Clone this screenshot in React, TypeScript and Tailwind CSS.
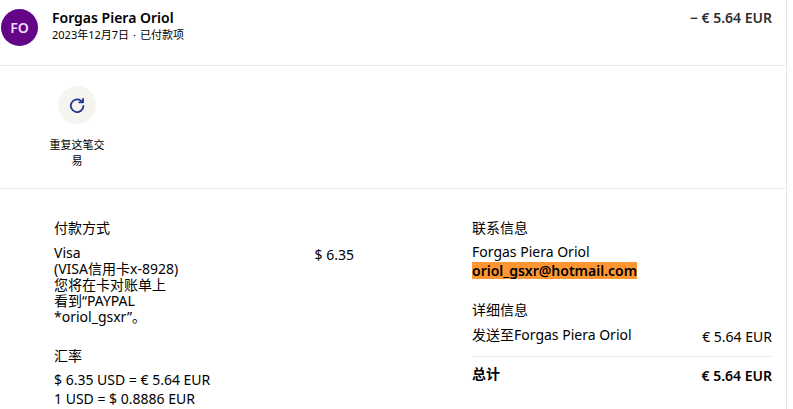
import React from "react";

type LineItemProps = {
  label: string;
  amount: string;
  bold?: boolean;
};

function LineItem({ label, amount, bold = false }: LineItemProps) {
  return (
    <div className={bold ? "flex justify-between font-semibold" : "flex justify-between"}>
      <dt>{label}</dt>
      <dd className="mt-0.5 text-right">{amount}</dd>
    </div>
  );
}

function SectionTitle({ children }: { children: React.ReactNode }) {
  return <h2 className="text-sm leading-4">{children}</h2>;
}

function RepeatIcon() {
  return (
    <svg viewBox="0 0 16 16" className="size-4" fill="none" stroke="#23369c" strokeWidth="1.8" aria-hidden="true">
      <path d="M14.4 8.9A6.3 6.3 0 1 1 11.9 3.7L13.4 5" strokeLinecap="round" strokeLinejoin="round" />
      <path d="M14 1.8V5.3H10.2" strokeLinecap="round" strokeLinejoin="round" />
    </svg>
  );
}

export default function App() {
  return (
    <div className="bg-white pr-1.5 font-['Noto_Sans','Noto_Sans_CJK_SC',sans-serif] text-sm leading-4 text-black">
      <main className="min-h-screen border-r border-[#e4e4e4]">
        <header className="flex items-start border-b border-[#ececec] pt-2 pr-3.5 pb-[19px]">
          <div className="mt-px mr-3.5 ml-px flex size-[37px] shrink-0 items-center justify-center rounded-full bg-[#640487] text-sm font-semibold text-[#f3d9fa]">
            FO
          </div>
          <div className="flex-1 pt-0.5">
            <h1 className="text-sm leading-4 font-semibold">Forgas Piera Oriol</h1>
            <p className="mt-px text-[11px] leading-4">
              2023年12月7日<span className="mx-1">·</span>已付款项
            </p>
          </div>
          <p className="pt-0.5 font-semibold text-[#2c2e2f]">− € 5.64 EUR</p>
        </header>

        <section className="border-b border-[#ececec] pt-5 pb-[19px] pl-12">
          <button type="button" className="flex w-14.5 flex-col items-center text-[11px] leading-4">
            <span className="mb-[13px] flex size-9.5 items-center justify-center rounded-full bg-[#f5f4ef]">
              <RepeatIcon />
            </span>
            重复这笔交易
          </button>
        </section>

        <div className="grid grid-cols-2 gap-x-[118px] pt-[31px] pr-3.5 pl-[54px]">
          <section>
            <SectionTitle>付款方式</SectionTitle>
            <div className="mt-[9px] flex justify-between">
              <p>
                Visa
                <br />
                (VISA信用卡x-8928)
                <br />
                您将在卡对账单上
                <br />
                看到“PAYPAL
                <br />
                *oriol_gsxr”。
              </p>
              <p className="mt-0.5">$ 6.35</p>
            </div>
            <div className="mt-[23px]">
              <SectionTitle>汇率</SectionTitle>
              <p className="mt-1.5 leading-[19px]">
                $ 6.35 USD = € 5.64 EUR
                <br />1 USD = $ 0.8886 EUR
              </p>
            </div>
          </section>

          <section>
            <SectionTitle>联系信息</SectionTitle>
            <p className="mt-2">Forgas Piera Oriol</p>
            <a href="mailto:oriol_gsxr@hotmail.com" className="mt-0.5 inline-block bg-[#ff9632] leading-[17px] font-semibold">
              oriol_gsxr@hotmail.com
            </a>
            <div className="mt-[23px]">
              <SectionTitle>详细信息</SectionTitle>
              <dl className="mt-[9px]">
                <LineItem label="发送至Forgas Piera Oriol" amount="€ 5.64 EUR" />
                <div className="mt-[11px] border-t border-[#ecebe4] pt-[9px]">
                  <LineItem label="总计" amount="€ 5.64 EUR" bold />
                </div>
              </dl>
            </div>
          </section>
        </div>
      </main>
    </div>
  );
}
